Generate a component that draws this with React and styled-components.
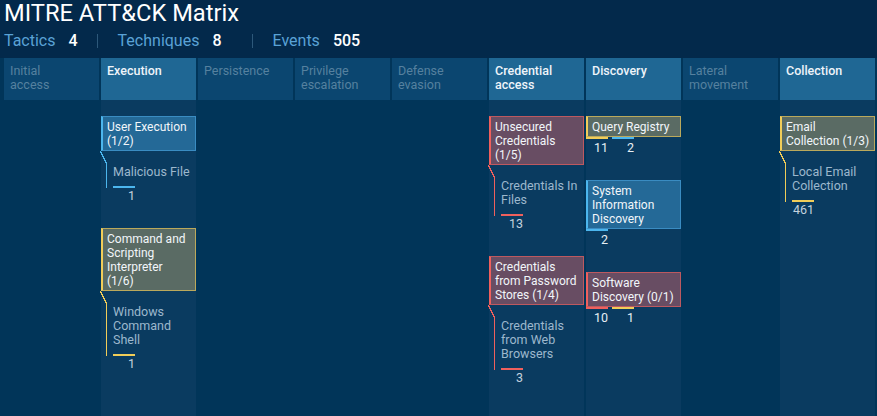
import React from "react";
import styled, { createGlobalStyle } from "styled-components";

// --- Data ---

const tones = {
  blue: { bg: "#246997", border: "#3a8cc2", accent: "#4cb6ee" },
  yellow: { bg: "#5a6b64", border: "#bba95c", accent: "#f1cd59" },
  red: { bg: "#684d63", border: "#bd5960", accent: "#ef605d" },
};

const stats = [
  { label: "Tactics", value: 4, space: 19 },
  { label: "Techniques", value: 8, space: 30 },
  { label: "Events", value: 505, space: 0 },
];

const tactics = [
  { name: "Initial access" },
  {
    name: "Execution",
    techniques: [
      {
        name: "User Execution (1/2)",
        tone: "blue",
        subs: [{ name: "Malicious File", bars: [{ tone: "blue", count: 1 }] }],
      },
      {
        name: "Command and Scripting Interpreter (1/6)",
        tone: "yellow",
        subs: [{ name: "Windows Command Shell", bars: [{ tone: "yellow", count: 1 }] }],
      },
    ],
  },
  { name: "Persistence" },
  { name: "Privilege escalation" },
  { name: "Defense evasion" },
  {
    name: "Credential access",
    techniques: [
      {
        name: "Unsecured Credentials (1/5)",
        tone: "red",
        subs: [{ name: "Credentials In Files", bars: [{ tone: "red", count: 13 }] }],
      },
      {
        name: "Credentials from Password Stores (1/4)",
        tone: "red",
        subs: [{ name: "Credentials from Web Browsers", bars: [{ tone: "red", count: 3 }] }],
      },
    ],
  },
  {
    name: "Discovery",
    techniques: [
      {
        name: "Query Registry",
        tone: "yellow",
        bars: [
          { tone: "yellow", count: 11 },
          { tone: "blue", count: 2 },
        ],
      },
      { name: "System Information Discovery", tone: "blue", bars: [{ tone: "blue", count: 2 }] },
      {
        name: "Software Discovery (0/1)",
        tone: "red",
        bars: [
          { tone: "red", count: 10 },
          { tone: "yellow", count: 1 },
        ],
      },
    ],
  },
  { name: "Lateral movement" },
  {
    name: "Collection",
    techniques: [
      {
        name: "Email Collection (1/3)",
        tone: "yellow",
        subs: [{ name: "Local Email Collection", bars: [{ tone: "yellow", count: 461 }] }],
      },
    ],
  },
];

// --- Styled Components ---

const GlobalStyle = createGlobalStyle`
  html, body {
    margin: 0;
    padding: 0;
    background: #013559;
  }
  body {
    font-family: Roboto, "Noto Sans", "Liberation Sans", sans-serif;
  }
`;

const Page = styled.div`
  height: 100vh;
  display: flex;
  flex-direction: column;
  overflow: hidden;
`;

const Top = styled.header`
  height: 58px;
  box-sizing: border-box;
  padding: 0 4px;
  background: #03294b;
`;

const Title = styled.h1`
  margin: 0;
  font-size: 23.7px;
  line-height: 26px;
  font-weight: 400;
  color: #ffffff;
`;

const Stats = styled.div`
  display: flex;
  align-items: center;
  margin-top: 5px;
  font-size: 16px;
  line-height: 20px;
`;

const Stat = styled.div`
  display: flex;
  align-items: center;
  gap: 13px;
  margin-right: ${(p) => p.$space}px;
`;

const StatLabel = styled.span`
  color: #5aa2d6;
`;

const StatValue = styled.span`
  color: #ffffff;
  font-weight: 500;
`;

const Divider = styled.span`
  width: 1px;
  height: 14px;
  background: #2d587a;
  margin-right: 20px;
`;

const Matrix = styled.div`
  flex: 1;
  display: grid;
  grid-template-columns: repeat(9, 95px);
  column-gap: 2px;
  padding-left: 4px;
`;

const Column = styled.section`
  display: flex;
  flex-direction: column;
`;

const ColumnHead = styled.div`
  height: 42px;
  box-sizing: border-box;
  padding: 6px 22px 6px 6px;
  font-size: 12.5px;
  line-height: 14px;
  font-weight: ${(p) => (p.$active ? 500 : 400)};
  color: ${(p) => (p.$active ? "#eef4fa" : "#56819f")};
  background: ${(p) => (p.$active ? "#1f6794" : "#0b4670")};
`;

const ColumnBody = styled.div`
  flex: 1;
  padding-top: 16px;
  background: ${(p) => (p.$active ? "#0a3b60" : "transparent")};
`;

const Group = styled.div`
  margin-bottom: 25px;
`;

const Card = styled.div`
  padding: 3px 3px 2px 4px;
  border: 1px solid ${(p) => tones[p.$tone].border};
  border-left: 2px solid ${(p) => tones[p.$tone].accent};
  background: ${(p) => tones[p.$tone].bg};
  color: #f2f6fa;
  font-size: 12px;
  line-height: 14px;
`;

const SubList = styled.div`
  position: relative;
  margin: 13px 0 0 5px;
  padding: 1px 3px 0 6px;
  border-left: 1px solid ${(p) => tones[p.$tone].accent};

  /* diagonal connector up to the card corner */
  &::before {
    content: "";
    position: absolute;
    top: -13px;
    left: -7px;
    width: 7px;
    height: 13px;
    background: linear-gradient(
      to top right,
      transparent calc(50% - 0.7px),
      ${(p) => tones[p.$tone].accent} calc(50% - 0.7px),
      ${(p) => tones[p.$tone].accent} calc(50% + 0.7px),
      transparent calc(50% + 0.7px)
    );
  }
`;

const SubName = styled.div`
  font-size: 12.5px;
  line-height: 14px;
  color: #9db8cd;
`;

const Bars = styled.div`
  display: flex;
  gap: 4px;
  margin-top: ${(p) => (p.$sub ? 7 : 0)}px;
`;

const Bar = styled.span`
  width: 22px;
  height: 2px;
  background: ${(p) => tones[p.$tone].accent};
`;

const Counts = styled.div`
  display: flex;
  gap: 4px;
  padding-top: ${(p) => (p.$sub ? 1 : 2)}px;
  margin-left: ${(p) => (p.$sub ? 12 : 0)}px;
`;

const Count = styled.span`
  width: 22px;
  text-align: right;
  font-size: 12.5px;
  line-height: 14px;
  color: ${(p) => (p.$sub ? "#c3d2de" : "#e6eef4")};
`;

// --- Components ---

const BarRow = ({ bars, sub }) => (
  <Bars $sub={sub}>
    {bars.map((b, i) => (
      <Bar key={i} $tone={b.tone} />
    ))}
  </Bars>
);

const CountRow = ({ bars, sub }) => (
  <Counts $sub={sub}>
    {bars.map((b, i) => (
      <Count key={i} $sub={sub}>
        {b.count}
      </Count>
    ))}
  </Counts>
);

const Technique = ({ technique }) => (
  <Group>
    <Card $tone={technique.tone}>{technique.name}</Card>
    {technique.subs ? (
      technique.subs.map((s) => (
        <React.Fragment key={s.name}>
          <SubList $tone={technique.tone}>
            <SubName>{s.name}</SubName>
            <BarRow bars={s.bars} sub />
          </SubList>
          <CountRow bars={s.bars} sub />
        </React.Fragment>
      ))
    ) : (
      <>
        <BarRow bars={technique.bars} />
        <CountRow bars={technique.bars} />
      </>
    )}
  </Group>
);

const App = () => {
  return (
    <Page>
      <GlobalStyle />
      <Top>
        <Title>MITRE ATT&amp;CK Matrix</Title>
        <Stats>
          {stats.map((s, i) => (
            <React.Fragment key={s.label}>
              {i > 0 && <Divider />}
              <Stat $space={s.space}>
                <StatLabel>{s.label}</StatLabel>
                <StatValue>{s.value}</StatValue>
              </Stat>
            </React.Fragment>
          ))}
        </Stats>
      </Top>
      <Matrix>
        {tactics.map((t) => {
          const active = !!t.techniques;
          return (
            <Column key={t.name}>
              <ColumnHead $active={active}>{t.name}</ColumnHead>
              <ColumnBody $active={active}>
                {t.techniques?.map((tech) => (
                  <Technique key={tech.name} technique={tech} />
                ))}
              </ColumnBody>
            </Column>
          );
        })}
      </Matrix>
    </Page>
  );
};

export default App;
